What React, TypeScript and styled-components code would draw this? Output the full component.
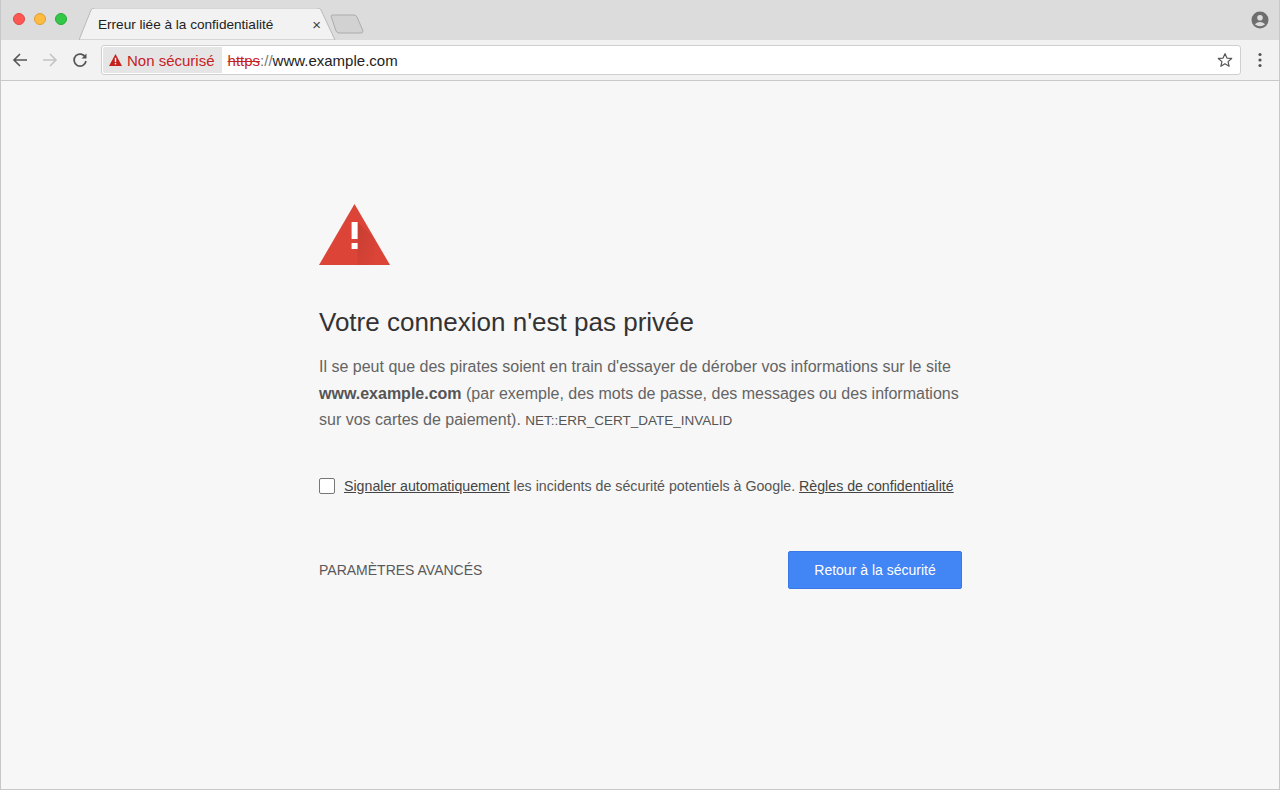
import React from "react";
import styled, { createGlobalStyle } from "styled-components";

const Global = createGlobalStyle`
  html, body { margin: 0; padding: 0; width: 1280px; height: 790px; overflow: hidden; }
  body { font-family: "Liberation Sans", Arial, sans-serif; }
`;

const Window = styled.div`
  width: 1280px; height: 790px; box-sizing: border-box;
  border: 1px solid #c8c8c8; border-top: none;
  display: flex; flex-direction: column; background: #f7f7f7;
`;
const TitleBar = styled.div`
  height: 40px; background: #dcdcdc; display: flex; align-items: flex-end;
  position: relative; padding-left: 12px;
`;
const Lights = styled.div`
  display: flex; gap: 9px; align-self: center;
`;
const Light = styled.span<{ c: string; b: string }>`
  width: 12px; height: 12px; border-radius: 50%; background: ${p => p.c};
  box-sizing: border-box; border: 1px solid ${p => p.b};
  position: relative; top: -1px;
`;
const TabWrap = styled.div`
  position: relative; margin-left: 12px; width: 258px; height: 32px;
`;
const TabShape = styled.svg`position: absolute; inset: 0;`;
const TabInner = styled.div`
  position: relative; height: 100%; display: flex; align-items: center;
  padding: 0 16px 0 19px; font-size: 13.6px; color: #222;
`;
const TabTitle = styled.span`flex: 1; padding-top: 1px;`;
const TabClose = styled.span`font-size: 15px; color: #444;`;
const NewTab = styled.svg`margin-left: -8px; margin-bottom: 6px;`;
const Profile = styled.div`position: absolute; right: 10px; top: 11px;`;

const Toolbar = styled.div`
  background: #f2f2f2; border-bottom: 1px solid #c9c9c9;
  display: flex; align-items: center; padding: 0 0 0 4px; box-sizing: border-box; height: 41px;
`;
const NavBtn = styled.div`width: 30px; display: flex; justify-content: center; align-items: center;`;
const Omni = styled.div`
  margin-left: 6px; flex: 1; height: 30px; box-sizing: border-box; background: #fff;
  border: 1px solid #cfcfcf; border-radius: 3px; display: flex; align-items: center; padding: 1px;
`;
const Chip = styled.div`
  height: 100%; background: #e5e5e5; color: #c5221f; display: flex; align-items: center;
  gap: 5px; padding: 0 7px 0 6px; font-size: 15px; border-radius: 2px 0 0 2px;
`;
const Url = styled.div`font-size: 15px; color: #222; padding-left: 6px; flex: 1;`;
const Strike = styled.span`color: #c5221f; text-decoration: line-through;`;
const Sep = styled.span`color: #777;`;
const Star = styled.div`width: 28px; display: flex; justify-content: center;`;
const Menu = styled.div`width: 38px; display: flex; justify-content: center;`;

const Content = styled.main`flex: 1; padding: 122px 0 0 318px;`;
const Column = styled.div`width: 660px; color: #646464;`;
const Heading = styled.h1`
  font-weight: normal; font-size: 26px; color: #333; margin: 38px 0 16px;
`;
const Para = styled.p`font-size: 16px; line-height: 26.5px; margin: 0; color: #646464; width: 655px;`;
const Bold = styled.b`color: #555;`;
const Code = styled.span`font-size: 13.5px; color: #555;`;
const CheckRow = styled.div`
  margin-top: 43px; display: flex; align-items: center; gap: 9px; font-size: 14.2px; color: #555;
`;
const Box = styled.span`
  width: 16px; height: 16px; box-sizing: border-box; border: 1px solid #777; border-radius: 2px; background: #fff; flex: none;
`;
const Link = styled.span`text-decoration: underline; color: #444;`;
const Actions = styled.div`
  margin-top: 57px; display: flex; justify-content: space-between; align-items: center; width: 643px;
`;
const Advanced = styled.span`font-size: 14px; color: #595959; text-transform: uppercase;`;
const Button = styled.button`
  width: 174px; height: 38px; background: #4285f4; color: #fff; border: 1px solid #3b78e7; border-radius: 2px;
  font-family: "Liberation Sans", Arial, sans-serif; font-size: 14px;
`;

export default function App() {
  return (
    <>
      <Global />
      <Window>
        <TitleBar>
          <Lights>
            <Light c="#fc5753" b="#df4744" />
            <Light c="#fdbc40" b="#de9f34" />
            <Light c="#33c748" b="#27aa35" />
          </Lights>
          <TabWrap>
            <TabShape width="258" height="32" viewBox="0 0 258 32">
              <path d="M0 32 L12 2 Q13 0 16 0 L238 0 Q241 0 242 2 L256 32 Z" fill="#f2f2f2" stroke="#b9b9b9" />
            </TabShape>
            <TabInner>
              <TabTitle>Erreur liée à la confidentialité</TabTitle>
              <TabClose>×</TabClose>
            </TabInner>
          </TabWrap>
          <NewTab width="36" height="20" viewBox="0 0 36 20">
            <path d="M2 2 Q2 1 4 1 L25 1 Q27 1 28 3 L34 17 Q34 19 32 19 L10 19 Q8 19 7 17 Z" fill="#d2d2d2" stroke="#acacac" />
          </NewTab>
          <Profile>
            <svg width="18" height="18" viewBox="0 0 18 18">
              <circle cx="9" cy="9" r="8.5" fill="#6e6e6e" />
              <circle cx="9" cy="6.8" r="2.8" fill="#dcdcdc" />
              <path d="M3.8 13.3 Q9 8.8 14.2 13.3 Q9 17 3.8 13.3Z" fill="#dcdcdc" />
            </svg>
          </Profile>
        </TitleBar>
        <Toolbar>
          <NavBtn>
            <svg width="16" height="16" viewBox="0 0 16 16"><path d="M15 8H2M8 2L2 8l6 6" stroke="#555" strokeWidth="1.6" fill="none" /></svg>
          </NavBtn>
          <NavBtn>
            <svg width="16" height="16" viewBox="0 0 16 16"><path d="M1 8h13M8 2l6 6-6 6" stroke="#c4c4c4" strokeWidth="1.6" fill="none" /></svg>
          </NavBtn>
          <NavBtn>
            <svg width="16" height="16" viewBox="0 0 16 16"><path d="M13.5 5.5A6 6 0 1 0 14 9" stroke="#555" strokeWidth="1.7" fill="none" /><path d="M14.5 1.5v5h-5z" fill="#555" /></svg>
          </NavBtn>
          <Omni>
            <Chip>
              <svg width="13" height="12" viewBox="0 0 13 12"><path d="M6.5 0L13 12H0z" fill="#c5221f" /><rect x="5.8" y="3.8" width="1.4" height="4.3" fill="#fff" /><rect x="5.8" y="9" width="1.4" height="1.4" fill="#fff" /></svg>
              Non sécurisé
            </Chip>
            <Url><Strike>https</Strike><Sep>://</Sep>www.example.com</Url>
            <Star>
              <svg width="16" height="16" viewBox="0 0 24 24"><path d="M12 2.5l2.9 6.6 7.1.6-5.4 4.7 1.6 7-6.2-3.8-6.2 3.8 1.6-7L2 9.7l7.1-.6z" stroke="#555" strokeWidth="1.8" fill="none" strokeLinejoin="round" /></svg>
            </Star>
          </Omni>
          <Menu>
            <svg width="4" height="16" viewBox="0 0 4 16"><circle cx="2" cy="2.5" r="1.6" fill="#555" /><circle cx="2" cy="8" r="1.6" fill="#555" /><circle cx="2" cy="13.5" r="1.6" fill="#555" /></svg>
          </Menu>
        </Toolbar>
        <Content>
          <Column>
            <svg width="72" height="62" viewBox="0 0 72 62">
              <defs>
                <linearGradient id="sh" x1="0" y1="0" x2="1" y2="1"><stop offset="0" stopColor="#000" stopOpacity="0.15" /><stop offset="1" stopColor="#000" stopOpacity="0" /></linearGradient>
              </defs>
              <path d="M35.5 1L71 62H0z" fill="#db4437" />
              <path d="M38.5 19L56 36V62H38.5z" fill="url(#sh)" opacity="0.6" />
              <rect x="32.6" y="19" width="6" height="17" fill="#fff" />
              <rect x="32.6" y="40" width="6" height="6" fill="#fff" />
            </svg>
            <Heading>Votre connexion n'est pas privée</Heading>
            <Para>
              Il se peut que des pirates soient en train d'essayer de dérober vos informations sur le site{" "}
              <Bold>www.example.com</Bold> (par exemple, des mots de passe, des messages ou des informations sur vos cartes de paiement). <Code>NET::ERR_CERT_DATE_INVALID</Code>
            </Para>
            <CheckRow>
              <Box />
              <span><Link>Signaler automatiquement</Link> les incidents de sécurité potentiels à Google. <Link>Règles de confidentialité</Link></span>
            </CheckRow>
            <Actions>
              <Advanced>Paramètres avancés</Advanced>
              <Button>Retour à la sécurité</Button>
            </Actions>
          </Column>
        </Content>
      </Window>
    </>
  );
}
